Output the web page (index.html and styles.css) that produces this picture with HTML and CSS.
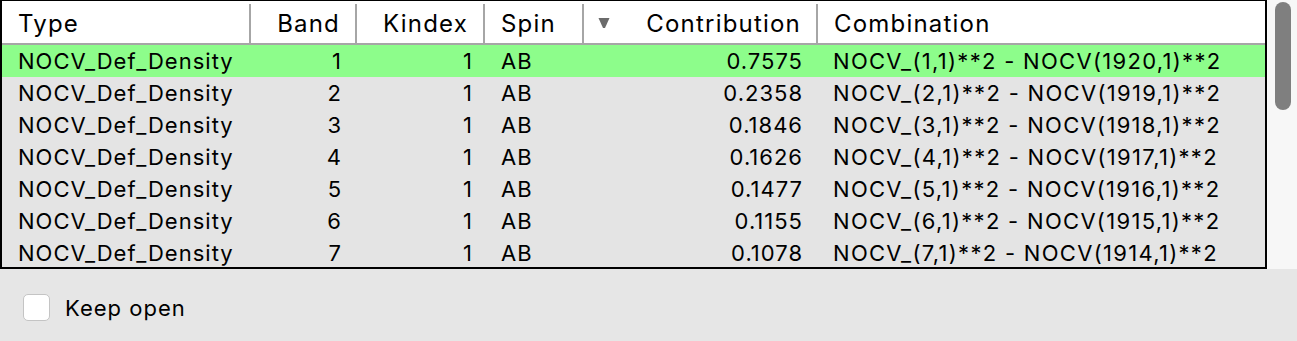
FILE: index.html
```html
<!DOCTYPE html>
<html lang="en">
<head>
    <meta charset="UTF-8">
    <title>NOCV Contributions</title>
    <link rel="stylesheet" href="styles.css">
</head>
<body>

    <div class="view">
        <div class="table-frame">
            <div class="grid header">
                <div class="hcell left">Type</div>
                <div class="hcell right">Band</div>
                <div class="hcell right">Kindex</div>
                <div class="hcell left">Spin</div>
                <div class="hcell right sorted">
                    <svg class="sort-arrow" width="12" height="12" viewBox="0 0 12 12"><path d="M0.5 1 H11.5 L7 11 H5 Z" fill="#6b6b6b"/></svg>
                    Contribution
                </div>
                <div class="hcell left last">Combination</div>
            </div>
            <div id="rows"></div>
        </div>
        <div class="scrollbar">
            <div class="thumb"></div>
        </div>
    </div>

    <div class="footer">
        <label class="keep-open"><span class="checkbox"></span>Keep open</label>
    </div>

    <script>
        const contributions = ['0.7575', '0.2358', '0.1846', '0.1626', '0.1477', '0.1155', '0.1078'];

        function buildRows() {
            let rows = document.getElementById('rows');
            contributions.forEach((value, i) => {
                let band = i + 1;
                let row = document.createElement('div');
                row.className = 'grid row' + (i === 0 ? ' selected' : '');
                row.innerHTML =
                    `<div class="cell left">NOCV_Def_Density</div>` +
                    `<div class="cell right">${band}</div>` +
                    `<div class="cell right kindex">1</div>` +
                    `<div class="cell left">AB</div>` +
                    `<div class="cell right">${value}</div>` +
                    `<div class="cell left combo">NOCV_(${band},1)**2 - NOCV(${1921 - band},1)**2</div>`;
                rows.appendChild(row);
            });
        }

        buildRows();
    </script>

</body>
</html>
```

FILE: styles.css
```css
body {
    margin: 0;
    font-family: Inter, "Liberation Sans", sans-serif;
    background-color: #e6e6e6;
    color: #000;
    height: 341px;
    overflow: hidden;
}

.view {
    display: flex;
    height: 269px;
}

.table-frame {
    width: 1263px;
    border: 2px solid #000;
    border-top-width: 1px;
    overflow: hidden;
    background-color: #e4e4e4;
}

.grid {
    display: grid;
    grid-template-columns: 249px 106px 128px 99px 234px 1fr;
}

.header {
    background-color: #fff;
    padding-top: 3px;
    height: 39px;
    border-bottom: 2px solid #a6a6a6;
    font-size: 24px;
    letter-spacing: 1.2px;
}

.hcell {
    display: flex;
    align-items: center;
    border-right: 2px solid #a6a6a6;
    padding: 0 15px 1px 16px;
}

.hcell.last {
    border-right: none;
}

.hcell.right {
    justify-content: flex-end;
}

.hcell.sorted {
    justify-content: space-between;
    padding-left: 14px;
    padding-right: 15px;
}

.row {
    height: 32px;
    font-size: 22px;
    letter-spacing: 1px;
}

.row.selected {
    background-color: #8dfd8b;
}

.cell {
    display: flex;
    align-items: center;
    padding: 0 15px 0 16px;
    white-space: nowrap;
}

.cell.right {
    justify-content: flex-end;
}

.cell.kindex {
    padding-right: 12px;
}

.cell.combo {
    padding-left: 15px;
    letter-spacing: 1.3px;
}

.scrollbar {
    flex: 1;
    background-color: #f7f7f7;
    border-left: 1px solid #fbfbfb;
    padding: 2px 6px 0 7px;
}

.thumb {
    width: 16px;
    height: 108px;
    border-radius: 8px;
    background-color: #7f7f7f;
}

.footer {
    padding: 25px 23px;
}

.keep-open {
    display: flex;
    align-items: center;
    gap: 15px;
    font-size: 22px;
    letter-spacing: 1px;
}

.checkbox {
    width: 25px;
    height: 25px;
    background-color: #fff;
    border: 1px solid #c4c4c4;
    border-radius: 5px;
}
```
